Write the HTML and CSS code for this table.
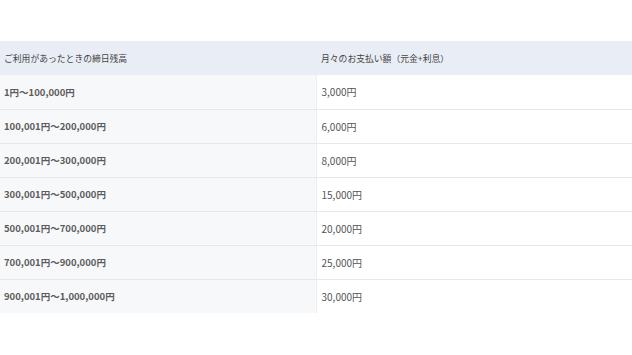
FILE: index.html
```html
<!DOCTYPE html>
<html lang="ja">
<head>
  <meta charset="UTF-8">
  <title>ご返済額</title>
  <link rel="stylesheet" href="styles.css">
</head>
<body>
  <div class="page">
    <table class="repay">
      <thead>
        <tr>
          <th class="range">ご利用があったときの締日残高</th>
          <th class="amount">月々のお支払い額（元金+利息）</th>
        </tr>
      </thead>
      <tbody>
        <tr><td class="range">1円〜100,000円</td><td class="amount">3,000円</td></tr>
        <tr><td class="range">100,001円〜200,000円</td><td class="amount">6,000円</td></tr>
        <tr><td class="range">200,001円〜300,000円</td><td class="amount">8,000円</td></tr>
        <tr><td class="range">300,001円〜500,000円</td><td class="amount">15,000円</td></tr>
        <tr><td class="range">500,001円〜700,000円</td><td class="amount">20,000円</td></tr>
        <tr><td class="range">700,001円〜900,000円</td><td class="amount">25,000円</td></tr>
        <tr><td class="range">900,001円〜1,000,000円</td><td class="amount">30,000円</td></tr>
      </tbody>
    </table>
  </div>
</body>
</html>
```

FILE: styles.css
```css
body {
  margin: 0;
  background: #fff;
  font-family: "Noto Sans CJK JP", "Noto Sans", sans-serif;
  color: #555;
}
.page {
  padding-top: 41px;
}
.repay {
  width: 632px;
  border-collapse: collapse;
  table-layout: fixed;
  font-size: 10px;
}
.repay th,
.repay td {
  box-sizing: border-box;
  height: 34px;
  padding: 0 0 0 4px;
  text-align: left;
  vertical-align: middle;
}
.repay th {
  background: #e9edf5;
  font-size: 8.8px;
  font-weight: 400;
  color: #444;
}
.repay th.range,
.repay td.range {
  width: 316px;
}
.repay th.amount {
  padding-left: 5px;
}
.repay td {
  border-bottom: 1px solid #e6e8ec;
}
.repay tbody tr:last-child td {
  border-bottom: none;
}
.repay td.range {
  background: #f7f8fa;
  border-right: 1px solid #eceef2;
  font-size: 9.5px;
  font-weight: 700;
  color: #5c5c5c;
}
.repay td.amount {
  padding-left: 5px;
  color: #555;
}
```
